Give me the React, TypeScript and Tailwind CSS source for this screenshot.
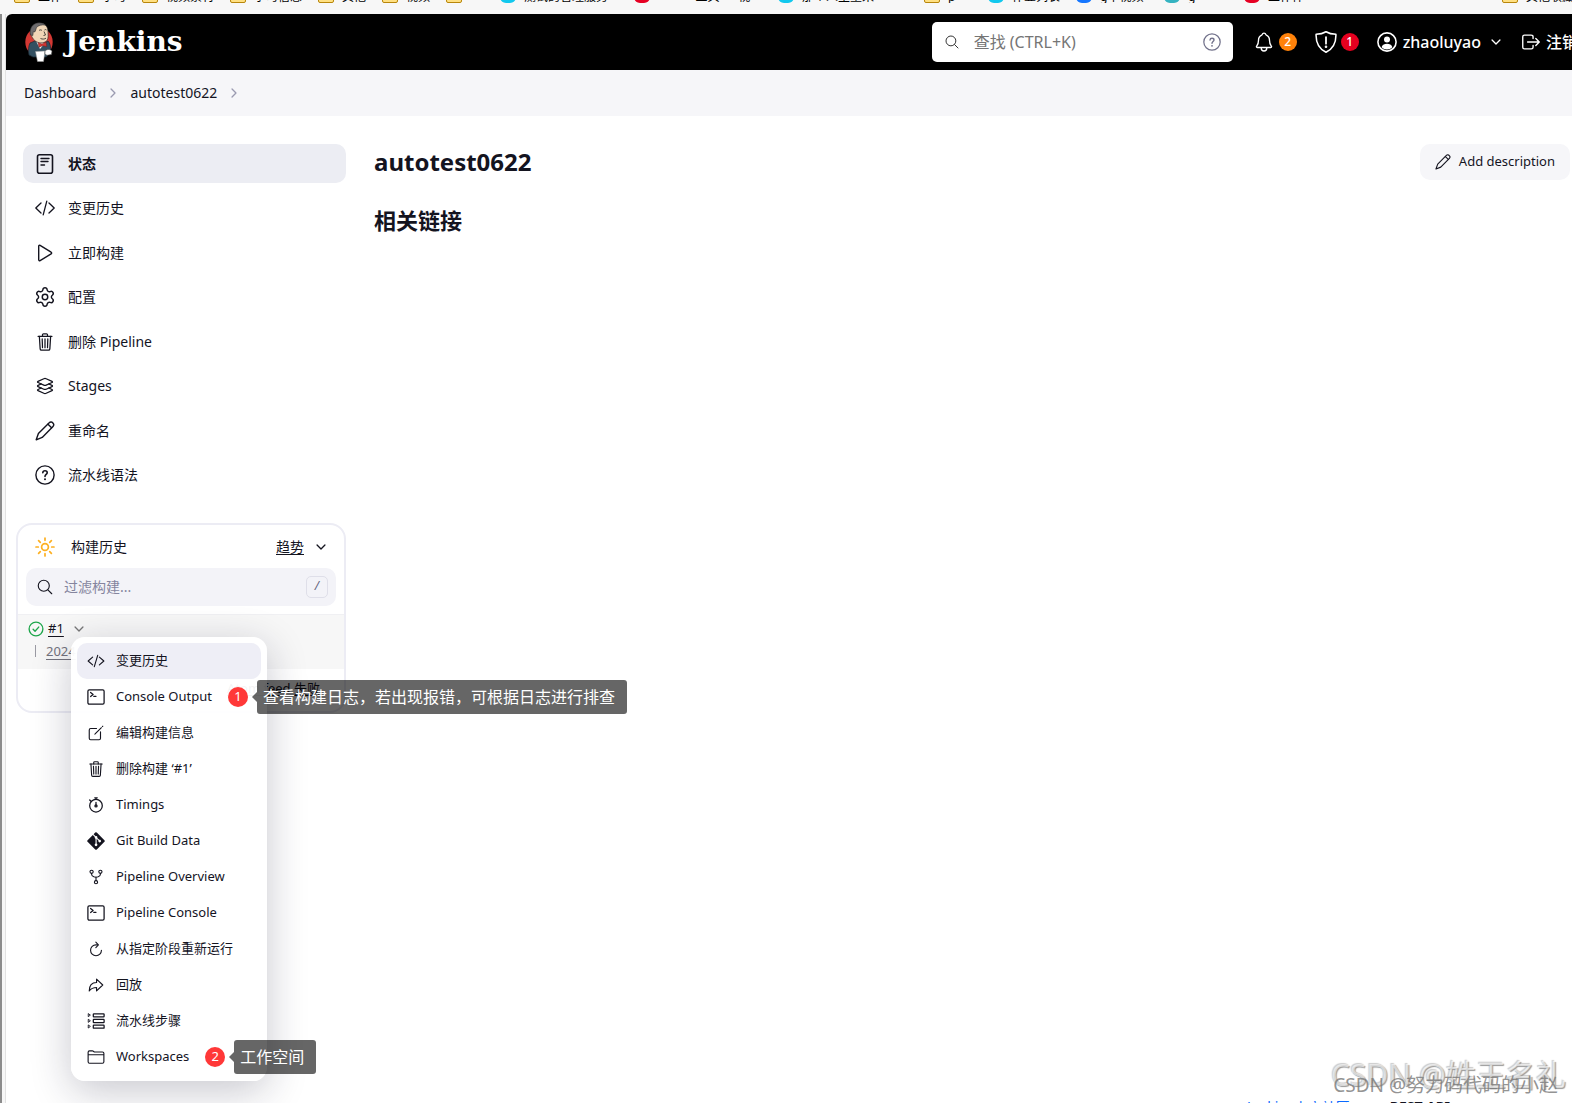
import type { ReactNode, SVGProps } from 'react';
import { Settings } from 'lucide-react';
import { FaGitAlt } from 'react-icons/fa';
import {
  IoArrowRedoOutline,
  IoChevronDown,
  IoChevronForward,
  IoCodeSlashOutline,
  IoCreateOutline,
  IoFolderOutline,
  IoLayersOutline,
  IoLogOutOutline,
  IoNotificationsOutline,
  IoSearchOutline,
  IoTrashOutline,
} from 'react-icons/io5';

function Icon({ children, ...props }: SVGProps<SVGSVGElement>) {
  return (
    <svg
      viewBox="0 0 20 20"
      fill="none"
      stroke="currentColor"
      strokeWidth="1.4"
      strokeLinecap="round"
      strokeLinejoin="round"
      aria-hidden="true"
      {...props}
    >
      {children}
    </svg>
  );
}

const StatusIcon = ({ className }: { className?: string }) => (
  <Icon className={className}>
    <rect x="2.5" y="0.8" width="15" height="18.4" rx="2" strokeWidth="1.6" />
    <path d="M6 4.5h8M6 7.5h7M6 11h3.5" />
  </Icon>
);

const CodeIcon = ({ className }: { className?: string }) => (
  <Icon className={className}>
    <path d="M6 5 .8 10 6 15M14 5l5.2 5-5.2 5M11.8 3.2 8.2 16.8" strokeWidth="1.3" />
  </Icon>
);

const PlayIcon = ({ className }: { className?: string }) => (
  <Icon className={className}>
    <path d="M3.7 3.2v13.6c0 .8.7 1.2 1.4.8l11-6.7c.7-.4.7-1.4 0-1.8l-11-6.7c-.7-.4-1.4 0-1.4.8z" />
  </Icon>
);

const SunIcon = ({ className }: { className?: string }) => (
  <Icon className={className} strokeWidth="1.7">
    <circle cx="10" cy="10" r="3.4" />
    <path d="M10 1v2.3M10 16.700V19M1 10h2.300M16.700 10H19M3.600 3.600l1.700 1.700M14.700 14.700l1.700 1.700M3.600 16.400l1.700-1.700M14.700 5.300l1.700-1.700" />
  </Icon>
);

const RestartIcon = ({ className }: { className?: string }) => (
  <Icon className={className}>
    <path d="M12 4.8H10A6.800 6.800 0 1 0 16.800 11.600" />
    <path d="M9.800 1.400 13 4.800 9.800 8.200" />
  </Icon>
);

const PencilIcon = ({ className }: { className?: string }) => (
  <Icon className={className}>
    <path d="M1.2 18.8 3.4 12.6 14.2 1.8a2.4 2.4 0 0 1 3.9.5 2.4 2.4 0 0 1-.1 3.2L7.2 16.4z" />
    <path d="m13 3.2 3.6 3.6" />
  </Icon>
);

const TerminalIcon = ({ className }: { className?: string }) => (
  <Icon className={className}>
    <rect x="1" y="2" width="18" height="16" rx="1.5" />
    <path d="m4 5 2.8 2.2L4 9.4M7.5 9.2H10" />
  </Icon>
);

const TimingsIcon = ({ className }: { className?: string }) => (
  <Icon className={className}>
    <circle cx="10" cy="10.8" r="7" />
    <path d="M10 3.6V2M8.6 2h2.8M3 4.4l1.4 1.4M10 7v4" />
    <circle cx="10" cy="11" r="1.2" />
  </Icon>
);

const ForkIcon = ({ className }: { className?: string }) => (
  <Icon className={className}>
    <circle cx="4.5" cy="3.5" r="2" />
    <circle cx="15.5" cy="3.5" r="2" />
    <circle cx="10" cy="16.5" r="2" />
    <path d="M4.500 5.500v1c0 2 1.300 2.600 2.800 3.100l2.700.8 2.700-.8c1.500-.5 2.800-1.100 2.800-3.100v-1M10 10.400v4" />
  </Icon>
);

const StepsIcon = ({ className }: { className?: string }) => (
  <Icon className={className}>
    <rect x="7" y="2" width="12" height="3.4" rx="0.6" />
    <rect x="7" y="8.3" width="12" height="3.4" rx="0.6" />
    <rect x="7" y="14.6" width="12" height="3.4" rx="0.6" />
    <path d="M1.4 2.2v3l2-1.5zM1.4 8.5v3l2-1.5zM1.4 14.8v3l2-1.5z" strokeWidth="1" />
  </Icon>
);

const ShieldIcon = ({ className }: { className?: string }) => (
  <Icon className={className}>
    <path d="M10 .7C7.3 2.3 4.3 2.900 1 3c-.3 7.800 2.200 13 9 16.300C16.800 16 19.300 10.800 19 3c-3.300-.1-6.300-.7-9-2.300z" />
    <path d="M10 5.5v6" strokeWidth="1.6" />
    <circle cx="10" cy="14.3" r="0.5" fill="currentColor" />
  </Icon>
);

const UserIcon = ({ className }: { className?: string }) => (
  <Icon className={className}>
    <circle cx="10" cy="10" r="9.1" strokeWidth="1.6" />
    <circle cx="10" cy="7.6" r="3" fill="currentColor" stroke="none" />
    <path d="M4.600 15.200c.8-2.500 3-3.400 5.400-3.400s4.600.9 5.400 3.400c-3 3-7.800 3-10.800 0z" fill="currentColor" stroke="none" />
  </Icon>
);

const HelpIcon = ({ className }: { className?: string }) => (
  <Icon className={className}>
    <circle cx="10" cy="10" r="9.1" />
    <path d="M7.8 7.8c.1-1.400 1-2 2.200-2 1.300 0 2.200.8 2.200 1.900 0 1.700-2.200 1.800-2.200 3.700" strokeWidth="1.6" />
    <circle cx="10" cy="14.2" r="1" fill="currentColor" stroke="none" />
  </Icon>
);

function Butler() {
  return (
    <svg viewBox="0 0 28 40" className="h-10 w-7" aria-hidden="true">
      <ellipse cx="14" cy="20" rx="13.7" ry="14.5" fill="#d33833" />
      <path d="M4 33c-1-4-.5-9 1-12l5-2 8 3 5-3c2 2 3 6 2.500 10l-3 4-1 2H8z" fill="#335061" stroke="#1b2a33" strokeWidth=".7" />
      <path d="M11 19l4 8 5-6z" fill="#fff" />
      <path d="M6 13C4.500 7 8 1 14.500 1c6 0 8.500 4 8.500 9 0 3 .6 6-1 8.500-2 2.500-7 3-10 1.500-3-1.500-4-3-6-7z" fill="#f0d6b7" stroke="#222" strokeWidth=".6" />
      <path d="M5.500 13C4 6 8 1 14 .8c3 0 5 .8 6.500 2.400-4-.8-7 .2-9 2.300-.6 1.700-.7 3.200-1.700 4.500l-1.500-.3-.4 3.800z" fill="#6d6b6d" stroke="#222" strokeWidth=".5" />
      <path d="M14 8.500c1-.8 2-.8 3 0M19.500 8c.7-.6 1.500-.6 2 0M19 9.500l1.500 3.500-2 .5M15.500 16.500c2 .9 4 .7 5.500-.3" fill="none" stroke="#222" strokeWidth=".8" />
      <path d="m13 20.500 4 1.500 4-2 .8 4.500-4.300-.8-3.500 1.600z" fill="#d33833" stroke="#731c1c" strokeWidth=".5" />
      <path d="M10.500 29.500 20 29l-1.500 10.500h-6z" fill="#fff" stroke="#999" strokeWidth=".5" />
      <path d="M20 29c2-2 5-2 7 0l-.5 3.500-4.500.8-2-1z" fill="#fff" stroke="#444" strokeWidth=".6" />
    </svg>
  );
}

const bookmarks = [
  { mark: 'folder', label: '工作', width: 'w-16' },
  { mark: 'folder', label: '学习', width: 'w-16' },
  { mark: 'folder', label: '视频素材', width: 'w-[88px]' },
  { mark: 'folder', label: '学习信息', width: 'w-[88px]' },
  { mark: 'folder', label: '其他', width: 'w-16' },
  { mark: 'folder', label: '视频', width: 'w-16' },
  { mark: 'folder', label: '', width: 'w-[54px]' },
  { mark: 'cyan', label: '测试的管理服务', width: 'w-[134px]' },
  { mark: 'red', label: '            工具      视', width: 'w-36' },
  { mark: 'cyan', label: '那个人生重来', width: 'w-[146px]' },
  { mark: 'folder', label: 'p', width: 'w-16' },
  { mark: 'cyan', label: '作业列表', width: 'w-[88px]' },
  { mark: 'blue', label: 'g中视频', width: 'w-[88px]' },
  { mark: 'teal', label: 'g', width: 'w-20' },
  { mark: 'red', label: '工作件', width: 'w-20' },
];

const markColors: Record<string, string> = {
  folder: 'rounded-[2px] border border-[#b8860b] bg-[#ffe082]',
  cyan: 'rounded-full bg-[#12c8ee]',
  red: 'rounded-full bg-[#e60023]',
  blue: 'rounded-full bg-[#1677ff]',
  teal: 'rounded-full bg-[#35b3c1]',
};

function Bookmark({ mark, label, width }: { mark: string; label: string; width?: string }) {
  return (
    <a href="#" className={`flex shrink-0 items-end gap-2 ${width ?? ''}`}>
      <span className={`h-3 w-4 shrink-0 ${markColors[mark]}`} />
      <span className="text-[12px] leading-3 whitespace-pre text-black">{label}</span>
    </a>
  );
}

const tasks: { label: string; icon: ReactNode }[] = [
  { label: '状态', icon: <StatusIcon className="size-5" /> },
  { label: '变更历史', icon: <CodeIcon className="size-5" /> },
  { label: '立即构建', icon: <PlayIcon className="size-5" /> },
  { label: '配置', icon: <Settings className="-m-px size-[22px]" strokeWidth={1.6} /> },
  { label: '删除 Pipeline', icon: <IoTrashOutline className="size-5" /> },
  { label: 'Stages', icon: <IoLayersOutline className="size-5" /> },
  { label: '重命名', icon: <PencilIcon className="size-5" /> },
  { label: '流水线语法', icon: <HelpIcon className="size-5" /> },
];

const menuItems: { label: string; icon: ReactNode; step?: number; note?: string }[] = [
  { label: '变更历史', icon: <IoCodeSlashOutline className="size-[18px]" /> },
  {
    label: 'Console Output',
    icon: <TerminalIcon className="size-[18px]" />,
    step: 1,
    note: '查看构建日志，若出现报错，可根据日志进行排查',
  },
  { label: '编辑构建信息', icon: <IoCreateOutline className="size-[18px]" /> },
  { label: '删除构建 ‘#1’', icon: <IoTrashOutline className="size-[18px]" /> },
  { label: 'Timings', icon: <TimingsIcon className="size-[18px]" /> },
  { label: 'Git Build Data', icon: <FaGitAlt className="size-5" /> },
  { label: 'Pipeline Overview', icon: <ForkIcon className="size-4" /> },
  { label: 'Pipeline Console', icon: <TerminalIcon className="size-[18px]" /> },
  { label: '从指定阶段重新运行', icon: <RestartIcon className="size-4" /> },
  { label: '回放', icon: <IoArrowRedoOutline className="size-[18px]" /> },
  { label: '流水线步骤', icon: <StepsIcon className="size-[18px]" /> },
  { label: 'Workspaces', icon: <IoFolderOutline className="size-[18px]" />, step: 2, note: '工作空间' },
];

function Callout({ step, note }: { step: number; note: string }) {
  return (
    <span className="ml-4 flex shrink-0 items-center">
      <span className="flex size-5 items-center justify-center rounded-full bg-[#ff3838] text-[13px] text-white">
        {step}
      </span>
      <span className="ml-1 border-y-5 border-r-5 border-y-transparent border-r-black/60" />
      <span className="rounded-[3px] bg-black/60 py-1 pr-3 pl-1.5 text-base leading-[26px] whitespace-nowrap text-white">
        {note}
      </span>
    </span>
  );
}

function BuildMenu() {
  return (
    <ul className="absolute top-[22px] left-[53px] z-10 w-49 rounded-[14px] bg-white/95 p-1.5 shadow-[0_10px_40px_rgba(20,20,50,0.24)]">
      {menuItems.map((item, index) => (
        <li key={item.label} className="flex h-9 items-center">
          <button
            className={`flex h-9 shrink-0 items-center gap-[11px] rounded-[10px] pl-2.5 text-left text-[13px] whitespace-nowrap ${
              index === 0 ? 'w-full bg-[#eeeef6]' : ''
            }`}
          >
            <span className="flex size-[18px] items-center justify-center">{item.icon}</span>
            {item.label}
          </button>
          {item.step && item.note && <Callout step={item.step} note={item.note} />}
        </li>
      ))}
    </ul>
  );
}

function Header() {
  return (
    <header className="flex h-14 shrink-0 items-center overflow-hidden rounded-tl-[6px] bg-black pl-[19px] text-white">
      <a href="#" className="flex items-center gap-3">
        <Butler />
        <span className="font-['DejaVu_Serif'] text-[28px] leading-9 font-bold">Jenkins</span>
      </a>
      <label className="ml-auto flex h-10 w-[301px] shrink-0 items-center rounded-[5px] bg-white px-3 text-[#333]">
        <IoSearchOutline className="size-4" />
        <input
          aria-label="查找"
          placeholder="查找 (CTRL+K)"
          className="ml-3.5 min-w-0 flex-1 text-base text-black outline-none placeholder:text-[#757575]"
        />
        <HelpIcon className="size-4.5 text-[#73738c]" />
      </label>
      <nav className="-mr-1.5 ml-5 flex shrink-0 items-center text-base font-medium">
        <a href="#" aria-label="通知" className="flex items-center gap-1">
          <IoNotificationsOutline className="size-[22px]" />
          <span className="flex size-[18px] items-center justify-center rounded-full bg-[#ff820a] text-[12px]">2</span>
        </a>
        <a href="#" aria-label="安全警告" className="ml-[18px] flex items-center gap-1">
          <ShieldIcon className="size-[22px]" />
          <span className="flex size-[18px] items-center justify-center rounded-full bg-[#e6001f] text-[12px]">1</span>
        </a>
        <a href="#" className="ml-[18px] flex items-center gap-1.5">
          <UserIcon className="size-5" />
          zhaoluyao
        </a>
        <button aria-label="用户菜单" className="ml-2">
          <IoChevronDown className="size-3.5" />
        </button>
        <a href="#" className="ml-[17px] flex items-center gap-1 whitespace-nowrap">
          <IoLogOutOutline className="size-[22px]" />
          注销
        </a>
      </nav>
    </header>
  );
}

function BuildHistory() {
  return (
    <section className="relative -ml-[7px] h-[190px] rounded-2xl border-2 border-[#ececf4] bg-white">
      <div className="flex h-[43px] items-center pr-4 pl-[17px] text-sm">
        <SunIcon className="size-5 text-[#fdb022]" />
        <h2 className="ml-4">构建历史</h2>
        <a href="#" className="ml-auto underline underline-offset-2">趋势</a>
        <IoChevronDown className="ml-2.5 size-3.5" />
      </div>
      <label className="mx-2 flex h-[38px] items-center rounded-[10px] bg-[#f3f3f8] pr-2 pl-2.5">
        <IoSearchOutline className="size-4.5" />
        <input
          aria-label="过滤构建"
          placeholder="过滤构建..."
          className="ml-2.5 min-w-0 flex-1 text-sm outline-none placeholder:text-[#85859e]"
        />
        <kbd className="flex size-[22px] items-center justify-center rounded-[5px] border border-[#dfdfe9] text-[12px] text-[#606078]">
          /
        </kbd>
      </label>
      <div className="relative mt-2 h-[55px] border-t border-[#f0f0f3] bg-[#f7f7f7] pt-1 pl-2.5">
        <div className="flex h-5 items-center text-[13px]">
          <Icon className="size-4 text-[#1ea64b]">
            <circle cx="10" cy="10" r="8.6" strokeWidth="1.7" />
            <path d="m6.4 10.4 2.4 2.4 4.6-5.2" strokeWidth="1.7" />
          </Icon>
          <a href="#" className="ml-1 underline underline-offset-3">#1</a>
          <IoChevronDown className="ml-2 size-3.5 text-[#777]" />
        </div>
        <div className="mt-1 flex items-center gap-2.5 pl-[7px] text-[13px] leading-4 text-[#73737d]">
          <span className="my-0.5 h-3 w-px bg-[#9a9aa3]" />
          <a href="#" className="underline underline-offset-3">2024</a>
        </div>
        <BuildMenu />
      </div>
      <p className="mt-2.5 pr-6 text-right text-[13px]">
        <a href="#" className="underline underline-offset-2">Atom feed 失败</a>
      </p>
    </section>
  );
}

export default function App() {
  return (
    <div className="flex h-screen flex-col overflow-hidden bg-[#f7f7f7] font-['Noto_Sans','Noto_Sans_CJK_SC',sans-serif] text-[#14141f]">
      <nav className="flex h-3.5 shrink-0 pl-3.5">
        <div className="flex h-[3px] w-full items-end overflow-hidden">
          {bookmarks.map((bookmark, index) => (
            <Bookmark key={index} {...bookmark} />
          ))}
          <span className="-mr-3.5 ml-auto">
            <Bookmark mark="folder" label="其他收藏夹" />
          </span>
        </div>
      </nav>
      <div className="flex min-h-0 flex-1">
        <div className="w-1.5 shrink-0 border-r border-l-2 border-r-[#e2e2e2] border-l-[#8c8c8c]" />
        <div className="flex min-w-0 flex-1 flex-col rounded-tl-[6px] bg-white">
          <Header />
          <nav className="flex h-[46px] shrink-0 items-center gap-2.5 bg-[#f6f6f9] pl-[18px] text-sm">
            <a href="#">Dashboard</a>
            <IoChevronForward className="size-3.5 text-[#9a9ab0]" />
            <a href="#">autotest0622</a>
            <IoChevronForward className="size-3.5 text-[#9a9ab0]" />
          </nav>
          <div className="flex min-h-0 flex-1 pt-7 pr-0.5 pl-[17px]">
            <aside className="w-[323px] shrink-0">
              <ul className="flex h-[351px] flex-col justify-between">
                {tasks.map((task, index) => (
                  <li key={task.label}>
                    <a
                      href="#"
                      className={`flex h-[39px] items-center gap-[13px] rounded-[10px] pl-3 text-sm ${
                        index === 0 ? 'bg-[#ecedf3] font-bold' : ''
                      }`}
                    >
                      {task.icon}
                      {task.label}
                    </a>
                  </li>
                ))}
              </ul>
              <div className="mt-7">
                <BuildHistory />
              </div>
            </aside>
            <main className="ml-7 min-w-0 flex-1">
              <div className="flex h-9 items-center justify-between">
                <h1 className="text-2xl leading-8 font-bold">autotest0622</h1>
                <button className="flex h-9 items-center gap-2 rounded-[10px] bg-[#f6f6f9] px-[15px] text-[13px]">
                  <PencilIcon className="size-4" />
                  Add description
                </button>
              </div>
              <h2 className="mt-[22px] text-[22px] leading-9 font-bold">相关链接</h2>
            </main>
          </div>
          <footer className="relative h-0.5 shrink-0">
            <div className="flex h-full justify-end gap-10 overflow-hidden pr-[122px] text-sm leading-3">
              <a href="#" className="text-[#0b6aff]">Jenkins中文社区</a>
              <a href="#" className="font-bold">REST API</a>
            </div>
            <span className="absolute right-1.5 bottom-2 text-[30px] leading-10 whitespace-nowrap text-white/60 [text-shadow:1px_1px_1px_#999,-1px_-1px_1px_#ccc]">
              CSDN @姓王名礼
            </span>
            <span className="absolute right-3.5 bottom-1 text-[19px] leading-7 whitespace-nowrap text-[#777]/80">
              CSDN @努力码代码的小赵
            </span>
          </footer>
        </div>
      </div>
    </div>
  );
}
